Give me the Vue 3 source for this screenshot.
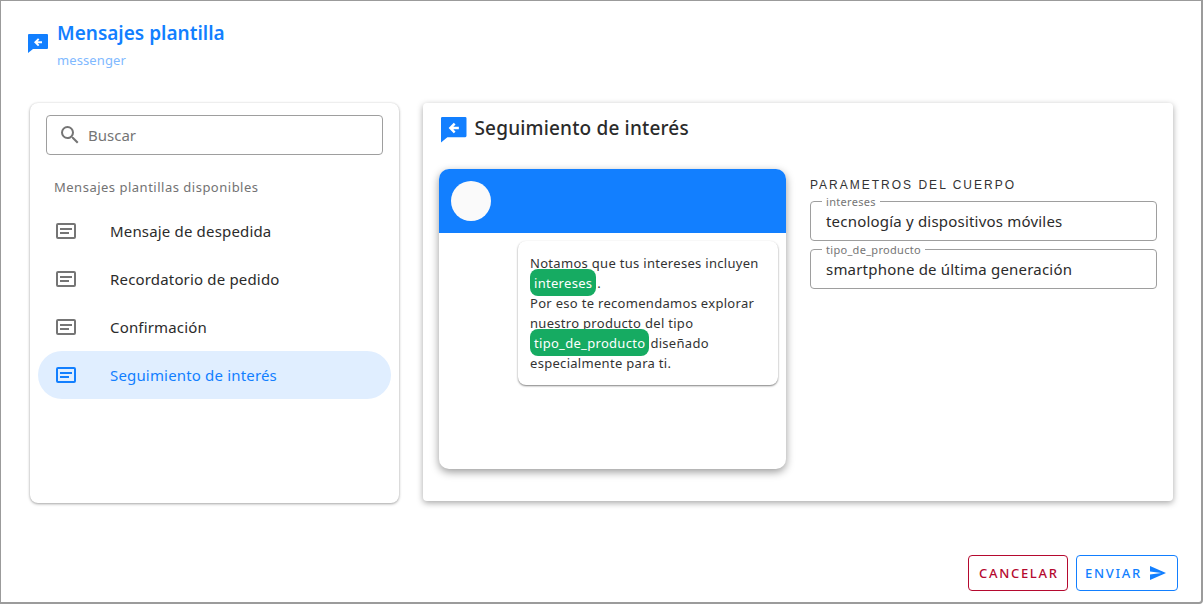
<script setup>
const templates = [
  { id: 1, name: 'Mensaje de despedida' },
  { id: 2, name: 'Recordatorio de pedido' },
  { id: 3, name: 'Confirmación' },
  { id: 4, name: 'Seguimiento de interés', active: true }
]

const params = [
  { label: 'intereses', value: 'tecnología y dispositivos móviles' },
  { label: 'tipo_de_producto', value: 'smartphone de última generación' }
]
</script>

<template>
  <div class="dialog">
    <header class="dialog-head">
      <svg class="head-icon" viewBox="0 0 20 19">
        <path fill="#127fff" d="M1 0h18a1 1 0 0 1 1 1v13a1 1 0 0 1-1 1H5l-5 4V1a1 1 0 0 1 1-1z" />
        <path fill="#fff" d="M14 7.200H9.700l1.700-1.700L10 4.200 6 8.200l4 4 1.400-1.300-1.700-1.700H14z" />
      </svg>
      <div class="head-text">
        <h1>Mensajes plantilla</h1>
        <span>messenger</span>
      </div>
    </header>

    <main class="dialog-body">
      <aside class="side">
        <div class="search">
          <svg viewBox="0 0 24 24"><path fill="#757575" d="M15.500 14h-.79l-.28-.27A6.470 6.470 0 0 0 16 9.500 6.500 6.500 0 1 0 9.500 16c1.610 0 3.090-.59 4.230-1.570l.27.28v.79l5 4.990L20.490 19l-4.990-5zm-6 0C7.010 14 5 11.990 5 9.500S7.010 5 9.500 5 14 7.010 14 9.500 11.990 14 9.500 14z" /></svg>
          <span>Buscar</span>
        </div>
        <p class="side-title">Mensajes plantillas disponibles</p>
        <ul class="list">
          <li v-for="t in templates" :key="t.id" :class="{ active: t.active }">
            <svg viewBox="0 0 20 16"><path fill="currentColor" fill-rule="evenodd" d="M2 0h16a2 2 0 0 1 2 2v12a2 2 0 0 1-2 2H2a2 2 0 0 1-2-2V2a2 2 0 0 1 2-2zm0 2v12h16V2zM4 5h12v2H4zm0 4h9v2H4z" /></svg>
            <span>{{ t.name }}</span>
          </li>
        </ul>
      </aside>

      <section class="detail">
        <div class="detail-head">
          <svg viewBox="0 0 20 19" preserveAspectRatio="none">
            <path fill="#127fff" d="M1 0h18a1 1 0 0 1 1 1v13a1 1 0 0 1-1 1H5l-5 4V1a1 1 0 0 1 1-1z" />
            <path fill="#fff" d="M14 7.200H9.700l1.700-1.700L10 4.200 6 8.200l4 4 1.400-1.300-1.700-1.700H14z" />
          </svg>
          <h2>Seguimiento de interés</h2>
        </div>
        <div class="detail-row">
          <div class="phone">
            <div class="phone-top"><div class="avatar"></div></div>
            <div class="bubble">
              Notamos que tus intereses incluyen <span class="chip">intereses</span>.<br />
              Por eso te recomendamos explorar nuestro producto del tipo <span class="chip">tipo_de_producto</span>diseñado especialmente para ti.
            </div>
          </div>
          <div class="params">
            <h3>PARAMETROS DEL CUERPO</h3>
            <div v-for="p in params" :key="p.label" class="field">
              <label>{{ p.label }}</label>
              <span>{{ p.value }}</span>
            </div>
          </div>
        </div>
      </section>
    </main>

    <footer class="dialog-foot">
      <button class="btn cancel">CANCELAR</button>
      <button class="btn send">
        ENVIAR
        <svg viewBox="2 3 21 18" preserveAspectRatio="none"><path fill="currentColor" d="M2.010 21 23 12 2.010 3 2 10l15 2-15 2z" /></svg>
      </button>
    </footer>
  </div>
</template>

<style>
html, body { margin: 0; background: #fff; }
</style>

<style scoped>
* { box-sizing: border-box; }
.dialog { width: 1203px; height: 604px; display: flex; flex-direction: column; background: #fff; border: 1px solid #9b9b9b; border-bottom-width: 2px; border-right-width: 2px; border-radius: 0 0 4px 0; font-family: "Noto Sans", sans-serif; color: #2b2b2b; overflow: hidden; }
.dialog-head { height: 102px; display: flex; padding: 20px 0 0 27px; gap: 9px; }
.head-icon { width: 20px; height: 19px; margin-top: 13px; flex-shrink: 0; }
.head-text h1 { margin: 0; font-size: 19px; line-height: 24px; font-weight: 600; color: #127fff; }
.head-text span { display: block; margin-top: 6px; font-size: 13px; line-height: 18px; color: #80b9ff; letter-spacing: .1px; }
.dialog-body { flex: 1; display: flex; align-items: flex-start; padding-left: 29px; gap: 24px; }
.side { width: 369px; height: 400px; background: #fff; border-radius: 8px; padding: 12px 8px; box-shadow: 0 1px 3px rgba(0, 0, 0, .35), 0 0 2px rgba(0, 0, 0, .08); }
.search { height: 40px; margin: 0 8px; border: 1px solid #9e9e9e; border-radius: 4px; display: flex; align-items: center; padding-left: 11px; gap: 6px; font-size: 15px; color: #757575; }
.search svg { width: 24px; height: 24px; }
.side-title { margin: 23px 0 0 8px; padding-left: 8px; font-size: 13px; line-height: 18px; color: #737373; letter-spacing: .5px; }
.list { list-style: none; margin: 11px 0 0; padding: 0; width: 353px; }
.list li { height: 48px; display: flex; align-items: center; padding-left: 18px; border-radius: 24px; font-size: 15px; letter-spacing: .17px; color: #2b2b2b; }
.list li svg { width: 20px; height: 16px; color: #757575; margin-right: 34px; flex-shrink: 0; }
.list li.active { background: #e0eeff; color: #127fff; }
.list li.active svg { color: #127fff; }
.detail { width: 750px; height: 398px; background: #fff; border-radius: 4px; padding: 10px 16px; box-shadow: 0 2px 6px rgba(0, 0, 0, .35); }
.detail-head { display: flex; align-items: center; gap: 8px; height: 30px; padding-left: 2px; }
.detail-head svg { width: 25.500px; height: 25.500px; margin-top: 4px; flex-shrink: 0; }
.detail-head h2 { margin: 0; font-size: 19px; font-weight: 500; letter-spacing: .17px; color: #2b2b2b; }
.detail-row { display: flex; margin-top: 26px; }
.phone { position: relative; width: 347px; height: 300px; border-radius: 10px; background: #fff; box-shadow: 0 3px 8px rgba(0, 0, 0, .4); overflow: hidden; }
.phone-top { height: 64px; background: #127fff; padding: 12px; }
.avatar { width: 40px; height: 40px; border-radius: 50%; background: #fafafa; }
.bubble { width: 260px; margin: 8px 0 0 79px; padding: 12px; border-radius: 8px; background: #fff; box-shadow: 0 1px 2px rgba(0, 0, 0, .5); font-size: 13px; line-height: 20px; letter-spacing: .3px; color: #333; }
.chip { background: #16ab62; color: #fff; border-radius: 8px; padding: 5px 4px 4px; margin-right: 1px; }
.params { width: 347px; margin-left: 24px; }
.params h3 { margin: 8px 0 8px; font: 400 12px/16px "Liberation Sans", sans-serif; letter-spacing: 2px; color: #333; }
.field { position: relative; height: 40px; margin-bottom: 8px; padding: 0 15px; border: 1px solid #9e9e9e; border-radius: 4px; font-size: 15px; letter-spacing: .2px; line-height: 38px; color: #2b2b2b; }
.field label { position: absolute; left: 11px; top: -6px; padding: 0 4px; background: #fff; font-size: 11px; line-height: 11px; letter-spacing: .3px; color: #757575; }
.dialog-foot { height: 48px; display: flex; justify-content: flex-end; gap: 8px; padding-right: 23px; }
.btn { height: 36px; margin-top: 1px; border-radius: 4px; background: #fff; border: 1px solid; font: 500 13px "Noto Sans", sans-serif; letter-spacing: 1.700px; display: flex; align-items: center; padding: 0 10px; }
.cancel { width: 100px; color: #b5092f; border-color: #b5092f; }
.send { width: 102px; color: #127fff; border-color: #127fff; gap: 8px; padding: 0 8px; }
.send svg { width: 16px; height: 14px; }
</style>
